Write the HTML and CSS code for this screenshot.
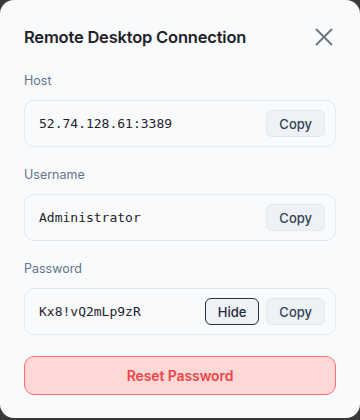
FILE: index.html
```html
<!DOCTYPE html>
<html>
<head>
<meta charset="utf-8">
<link rel="stylesheet" href="styles.css">
</head>
<body>
<div class="dialog">
  <div class="header">
    <h1 class="title">Remote Desktop Connection</h1>
    <button class="close" aria-label="Close">
      <svg width="18" height="18" viewBox="0 0 18 18"><path d="M1.5 1.5 L16.5 16.5 M16.5 1.5 L1.5 16.5" stroke="#6b7280" stroke-width="1.8" stroke-linecap="round" fill="none"/></svg>
    </button>
  </div>
  <div class="fields">
    <div class="field">
      <div class="label">Host</div>
      <div class="box">
        <span class="value">52.74.128.61:3389</span>
        <div class="actions"><button class="btn">Copy</button></div>
      </div>
    </div>
    <div class="field">
      <div class="label">Username</div>
      <div class="box">
        <span class="value">Administrator</span>
        <div class="actions"><button class="btn">Copy</button></div>
      </div>
    </div>
    <div class="field">
      <div class="label">Password</div>
      <div class="box">
        <span class="value">Kx8!vQ2mLp9zR</span>
        <div class="actions"><button class="btn btn-active">Hide</button><button class="btn">Copy</button></div>
      </div>
    </div>
  </div>
  <button class="reset">Reset Password</button>
</div>
</body>
</html>
```
FILE: styles.css
```css
* { box-sizing: border-box; }
html, body { margin: 0; padding: 0; }
body {
  background: #383838;
  width: 360px;
  height: 420px;
  font-family: Inter, "Noto Sans", sans-serif;
}
.dialog {
  width: 360px;
  height: 418px;
  background: #f8fafc;
  border-radius: 14px;
  padding: 25px 24px 0 24px;
}
.header {
  display: flex;
  justify-content: space-between;
  align-items: center;
  height: 24px;
}
.title {
  margin: 0;
  font-size: 16.5px;
  font-weight: 600;
  color: #1f2329;
  line-height: 24px;
  letter-spacing: -0.2px;
}
.close {
  border: 0;
  background: transparent;
  padding: 0;
  margin-right: 3px;
  width: 18px;
  height: 18px;
  display: flex;
}
.fields {
  margin-top: 23px;
  display: flex;
  flex-direction: column;
  gap: 19px;
}
.label {
  font-size: 12.5px;
  line-height: 18px;
  color: #64748b;
  margin-bottom: 10px;
}
.box {
  height: 47px;
  border: 1px solid #e2e8f0;
  border-radius: 10px;
  background: #f8fafc;
  display: flex;
  align-items: center;
  justify-content: space-between;
  padding: 0 10px 0 14px;
}
.value {
  font-family: "DejaVu Sans Mono", monospace;
  font-size: 13px;
  color: #1f2328;
}
.actions {
  display: flex;
  gap: 7px;
}
.btn {
  height: 27px;
  padding: 0 12px;
  border: 1px solid #e2e8f0;
  background: #eef2f6;
  border-radius: 6px;
  font-family: Inter, "Noto Sans", sans-serif;
  font-size: 13px;
  color: #334155;
  font-weight: 500;
}
.btn-active {
  border-color: #2b3340;
  color: #1e293b;
}
.reset {
  margin-top: 21px;
  width: 100%;
  height: 39px;
  border: 1px solid #f87171;
  background: #fed7d7;
  border-radius: 10px;
  color: #ef4444;
  font-family: Inter, "Noto Sans", sans-serif;
  font-size: 14px;
  font-weight: 600;
  letter-spacing: -0.1px;
}
```
